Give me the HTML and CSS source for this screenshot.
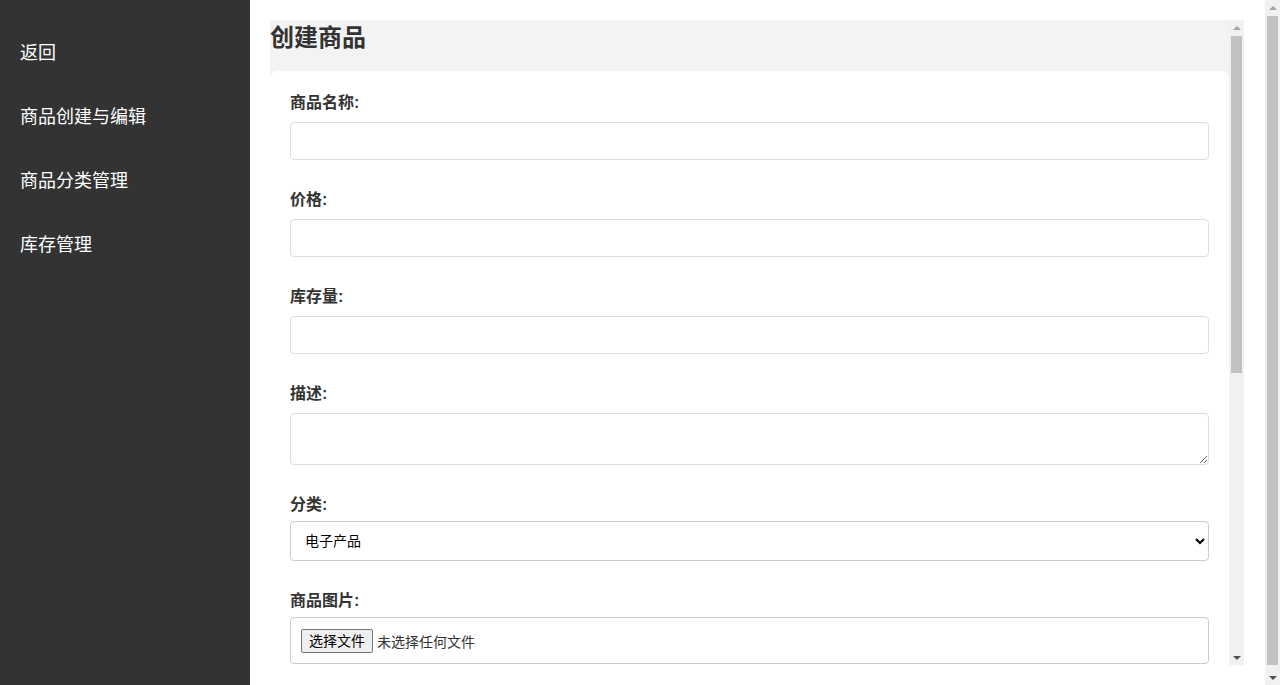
FILE: index.html
```html
<!DOCTYPE html>
<html lang="zh-CN">

<head>
    <meta charset="UTF-8">
    <meta name="viewport" content="width=device-width, initial-scale=1.0">
    <title>创建商品</title>
    <link rel="stylesheet" href="styles.css">
</head>

<body>
    <nav class="sidebar">
        <a href="#">返回</a>
        <a href="#">商品创建与编辑</a>
        <a href="#">商品分类管理</a>
        <a href="#">库存管理</a>
    </nav>

    <main class="main">
        <div class="panel">
            <div class="panel-body">
                <h1>创建商品</h1>

                <form class="card" id="productForm">
                    <div class="form-field">
                        <label for="name">商品名称:</label>
                        <input type="text" id="name" required>
                    </div>

                    <div class="form-field">
                        <label for="price">价格:</label>
                        <input type="text" id="price" required>
                    </div>

                    <div class="form-field">
                        <label for="stock">库存量:</label>
                        <input type="text" id="stock" required>
                    </div>

                    <div class="form-field">
                        <label for="desc">描述:</label>
                        <textarea id="desc"></textarea>
                    </div>

                    <div class="form-field">
                        <label for="category">分类:</label>
                        <select id="category">
                            <option value="electronics">电子产品</option>
                            <option value="clothes">服装</option>
                            <option value="food">食品</option>
                            <option value="books">图书</option>
                        </select>
                    </div>

                    <div class="form-field">
                        <label for="image">商品图片:</label>
                        <div class="file-box">
                            <input type="file" id="image" class="file-input">
                            <label for="image" class="file-btn">选择文件</label>
                            <span class="file-name">未选择任何文件</span>
                        </div>
                    </div>

                    <div class="form-field">
                        <label for="brand">品牌:</label>
                        <input type="text" id="brand">
                    </div>

                    <div class="form-field">
                        <label for="weight">重量 (kg):</label>
                        <input type="text" id="weight">
                    </div>

                    <div class="form-field">
                        <label for="sku">商品编码:</label>
                        <input type="text" id="sku">
                    </div>

                    <div class="form-field">
                        <label for="status">状态:</label>
                        <select id="status">
                            <option value="on">上架</option>
                            <option value="off">下架</option>
                        </select>
                    </div>

                    <div class="actions">
                        <button type="submit">保存商品</button>
                        <button type="reset" class="reset">重置</button>
                    </div>
                </form>
            </div>

            <!-- scrollbar of the panel -->
            <div class="scrollbar">
                <span class="sb-btn"><i class="arrow-up muted"></i></span>
                <div class="sb-track">
                    <div class="sb-thumb panel-thumb"></div>
                </div>
                <span class="sb-btn"><i class="arrow-down"></i></span>
            </div>
        </div>
    </main>

    <!-- scrollbar of the window -->
    <div class="scrollbar page-bar">
        <span class="sb-btn"><i class="arrow-up muted"></i></span>
        <div class="sb-track">
            <div class="sb-thumb page-thumb"></div>
        </div>
        <span class="sb-btn"><i class="arrow-down"></i></span>
    </div>
</body>

</html>
```

FILE: styles.css
```css
body {
    margin: 0;
    height: 100vh;
    overflow: hidden;
    display: flex;
    font-family: "Liberation Sans", "Noto Sans CJK SC", sans-serif;
    color: #333;
    background-color: #ffffff;
}

.sidebar {
    width: 250px;
    flex-shrink: 0;
    padding: 21px 0 20px;
    box-sizing: border-box;
    background-color: #333;
}

.sidebar a {
    display: block;
    padding: 19px 20px;
    font-size: 18px;
    line-height: 26px;
    color: #ffffff;
    text-decoration: none;
}

.main {
    flex: 1;
    min-width: 0;
    padding: 20px 21px 20px 20px;
}

.panel {
    display: flex;
    height: 645px;
    background-color: #f3f3f3;
}

.panel-body {
    flex: 1;
    min-width: 0;
    overflow-y: auto;
}

/* scrollbars */
.scrollbar {
    width: 15px;
    flex-shrink: 0;
    display: flex;
    flex-direction: column;
    background-color: #f1f1f1;
}

.sb-btn {
    height: 15px;
    display: flex;
    align-items: center;
    justify-content: center;
}

.sb-track {
    flex: 1;
    display: flex;
    flex-direction: column;
    padding: 1px 2px 0 2px;
}

.sb-thumb {
    background-color: #c1c1c1;
}

.panel-thumb {
    height: 337px;
}

.page-thumb {
    flex: 1;
    margin-bottom: 5px;
}

.arrow-up,
.arrow-down {
    width: 0;
    height: 0;
    border-left: 4px solid transparent;
    border-right: 4px solid transparent;
}

.arrow-up {
    border-bottom: 4px solid #505050;
}

.arrow-down {
    border-top: 4px solid #505050;
}

.arrow-up.muted {
    border-bottom-color: #a3a3a3;
}

.page-bar {
    height: 100vh;
}

/* form */
h1 {
    margin: 0 0 16px;
    font-size: 24px;
    line-height: 35px;
    color: #333;
}

.card {
    padding: 20px;
    background-color: #ffffff;
    border-radius: 8px;
}

.form-field {
    margin-bottom: 28px;
}

.form-field > label {
    display: block;
    margin-bottom: 5px;
    font-size: 16px;
    line-height: 23px;
    font-weight: bold;
}

input[type="text"],
textarea {
    display: block;
    width: 100%;
    margin-top: 8px;
    padding: 10px;
    box-sizing: border-box;
    border: 1px solid #ddd;
    border-radius: 4px;
    font-size: 14px;
}

input[type="text"] {
    height: 38px;
}

textarea {
    height: 52px;
}

select {
    display: block;
    width: 100%;
    height: 40px;
    padding: 0 10px;
    border: 1px solid #ccc;
    border-radius: 4px;
    background-color: #ffffff;
    font-family: "Liberation Sans", "Noto Sans CJK SC", sans-serif;
    font-size: 14px;
    color: #000;
}

.file-box {
    display: flex;
    align-items: center;
    height: 47px;
    padding: 0 10px;
    box-sizing: border-box;
    border: 1px solid #ccc;
    border-radius: 4px;
}

.file-input {
    display: none;
}

.file-btn {
    padding: 1px 7px;
    border: 1px solid #767676;
    border-radius: 2px;
    background-color: #efefef;
    font-size: 14px;
    line-height: 20px;
    color: #000;
    cursor: pointer;
}

.file-name {
    margin-left: 4px;
    font-size: 14px;
    color: #333;
}

.actions {
    margin-top: 10px;
    padding-bottom: 20px;
}

button {
    padding: 10px 20px;
    border: none;
    border-radius: 4px;
    background-color: #28a745;
    color: white;
    font-size: 16px;
    cursor: pointer;
    margin-right: 10px;
}

button.reset {
    background-color: #6c757d;
}
```
